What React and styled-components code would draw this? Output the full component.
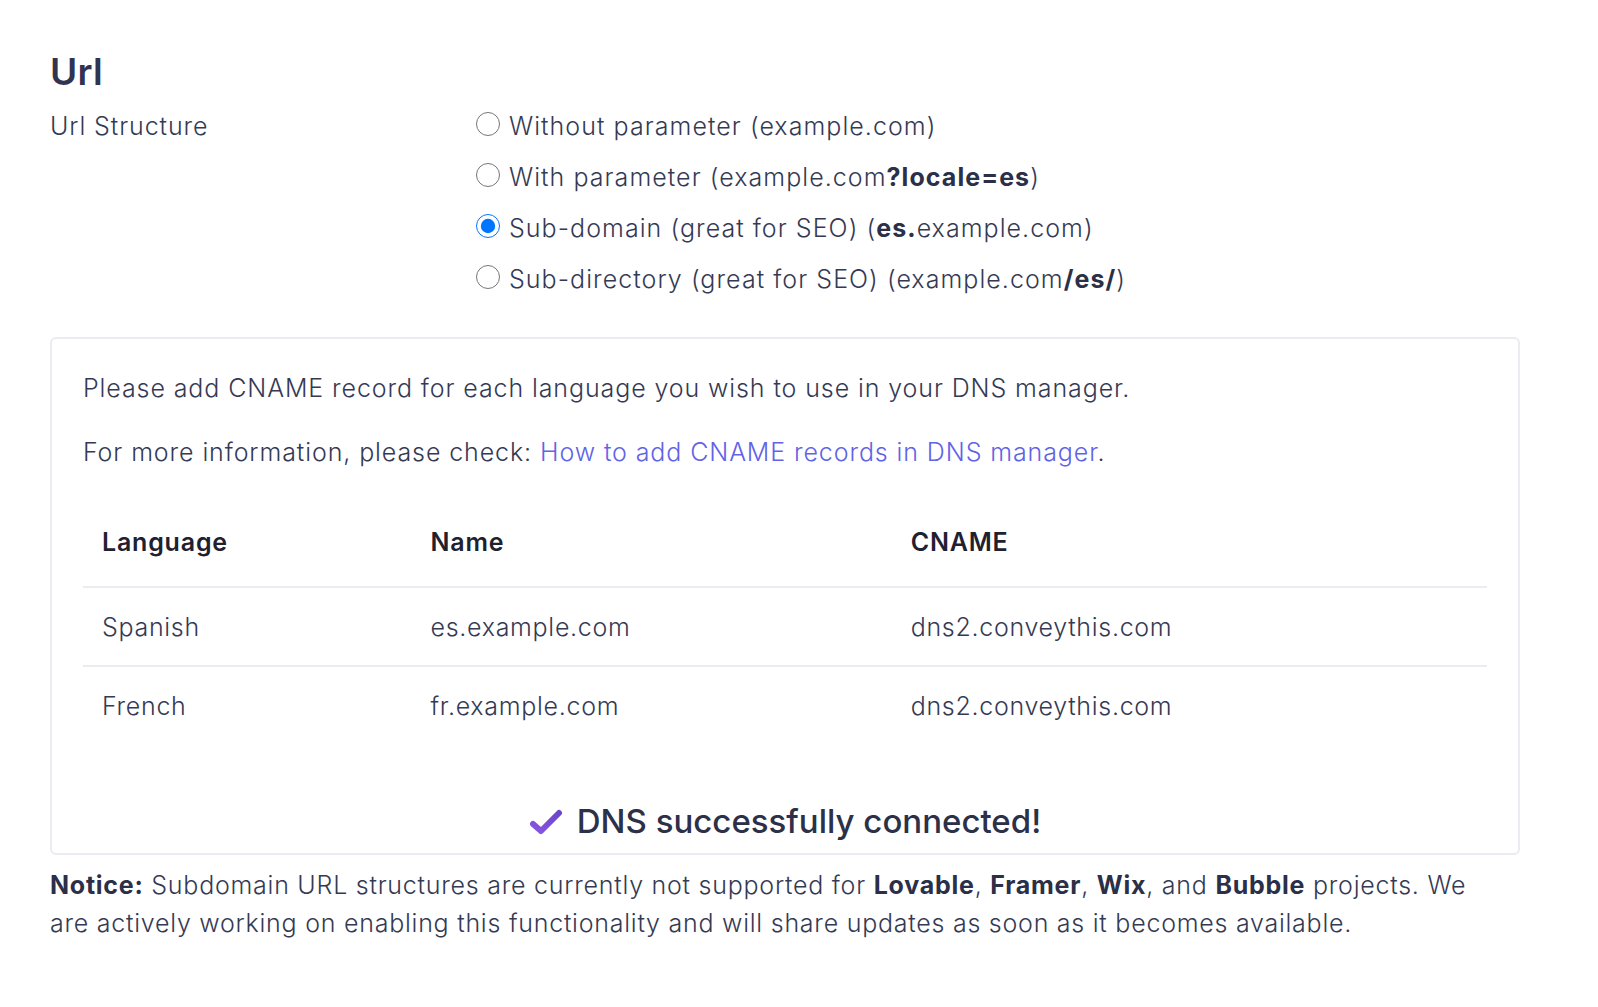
import React, { useState } from 'react';
import styled, { createGlobalStyle } from 'styled-components';

const GlobalStyle = createGlobalStyle`
  html, body {
    margin: 0;
    padding: 0;
    background: #ffffff;
  }
  body {
    font-family: Inter, "Open Sans", sans-serif;
    font-weight: 300;
    color: #353a54;
  }
`;

const Page = styled.div`
  width: 1470px;
  padding: 50px 0 40px 50px;
`;

const Title = styled.h2`
  margin: 0 0 12px;
  font-size: 37px;
  font-weight: 600;
  line-height: 44px;
  color: #2f3450;
  letter-spacing: 0.3px;
`;

const FieldRow = styled.div`
  display: grid;
  grid-template-columns: 426px 1fr;
  align-items: start;
`;

const FieldLabel = styled.div`
  font-size: 25px;
  line-height: 32px;
  padding-top: 4px;
  letter-spacing: 0.9px;
`;

const Options = styled.div`
  display: flex;
  flex-direction: column;
  gap: 11px;
`;

const Option = styled.label`
  display: flex;
  align-items: center;
  gap: 9px;
  height: 40px;
  font-size: 25px;
  letter-spacing: 1.05px;
  cursor: pointer;

  input {
    width: 24px;
    height: 24px;
    margin: 0 0 4px;
    cursor: pointer;
  }

  b {
    font-weight: 700;
    color: #2b2f47;
  }
`;

const Panel = styled.div`
  margin-top: 38px;
  border: 2px solid #ebebf1;
  border-radius: 6px;
  padding: 31px 31px 12px;
`;

const Para = styled.p`
  margin: 0 0 28px;
  font-size: 25px;
  line-height: 36px;
  letter-spacing: 0.9px;
`;

const Link = styled.a`
  color: #5f63e6;
  text-decoration: none;
`;

const Table = styled.table`
  width: 100%;
  border-collapse: collapse;
  margin-top: 34px;
`;

const Th = styled.th`
  text-align: left;
  font-weight: 600;
  font-size: 25px;
  line-height: 36px;
  color: #1f2130;
  padding: 20px 19px 26px;
  border-bottom: 2px solid #ebebf1;
  letter-spacing: 0.8px;
  width: ${({ w }) => w || 'auto'};
`;

const Td = styled.td`
  font-size: 25px;
  padding: 21px 19px 20px;
  line-height: 36px;
  letter-spacing: 0.7px;
  border-bottom: ${({ last }) => (last ? 'none' : '2px solid #ebebf1')};
`;

const Success = styled.div`
  display: flex;
  align-items: center;
  justify-content: center;
  gap: 14px;
  margin-top: 57px;
  font-family: Inter, "Noto Sans", sans-serif;
  font-size: 33px;
  font-weight: 500;
  color: #2c3048;
`;

const Notice = styled.p`
  max-width: 1440px;
  margin: 11px 0 0;
  font-size: 25px;
  line-height: 38px;
  letter-spacing: 0.75px;

  b {
    font-weight: 700;
    color: #2b2f47;
  }
`;

const Check = () => (
  <svg width="34" height="28" viewBox="0 0 34 28">
    <defs>
      <linearGradient id="chk" x1="0" y1="1" x2="1" y2="0">
        <stop offset="0" stopColor="#8a55e0" />
        <stop offset="1" stopColor="#6a47c8" />
      </linearGradient>
    </defs>
    <path
      d="M4 17 L12 24 L30 6"
      fill="none"
      stroke="url(#chk)"
      strokeWidth="6"
      strokeLinecap="round"
      strokeLinejoin="round"
    />
  </svg>
);

const options = [
  { id: 'none', label: <>Without parameter (example.com)</> },
  { id: 'param', label: <>With parameter (example.com<b>?locale=es</b>)</> },
  { id: 'sub', label: <>Sub-domain (great for SEO) (<b>es.</b>example.com)</> },
  { id: 'dir', label: <>Sub-directory (great for SEO) (example.com<b>/es/</b>)</> },
];

const records = [
  { lang: 'Spanish', name: 'es.example.com', cname: 'dns2.conveythis.com' },
  { lang: 'French', name: 'fr.example.com', cname: 'dns2.conveythis.com' },
];

export default function App() {
  const [structure, setStructure] = useState('sub');

  return (
    <>
      <GlobalStyle />
      <Page>
        <Title>Url</Title>
        <FieldRow>
          <FieldLabel>Url Structure</FieldLabel>
          <Options>
            {options.map((o) => (
              <Option key={o.id}>
                <input
                  type="radio"
                  name="structure"
                  checked={structure === o.id}
                  onChange={() => setStructure(o.id)}
                />
                <span>{o.label}</span>
              </Option>
            ))}
          </Options>
        </FieldRow>

        <Panel>
          <Para>Please add CNAME record for each language you wish to use in your DNS manager.</Para>
          <Para>
            For more information, please check:{' '}
            <Link href="#">How to add CNAME records in DNS manager</Link>.
          </Para>
          <Table>
            <thead>
              <tr>
                <Th w="23.4%">Language</Th>
                <Th w="34.2%">Name</Th>
                <Th>CNAME</Th>
              </tr>
            </thead>
            <tbody>
              {records.map((r, i) => (
                <tr key={r.lang}>
                  <Td last={i === records.length - 1}>{r.lang}</Td>
                  <Td last={i === records.length - 1}>{r.name}</Td>
                  <Td last={i === records.length - 1}>{r.cname}</Td>
                </tr>
              ))}
            </tbody>
          </Table>
          <Success>
            <Check />
            DNS successfully connected!
          </Success>
        </Panel>

        <Notice>
          <b>Notice:</b> Subdomain URL structures are currently not supported for <b>Lovable</b>,{' '}
          <b>Framer</b>, <b>Wix</b>, and <b>Bubble</b> projects. We are actively working on enabling
          this functionality and will share updates as soon as it becomes available.
        </Notice>
      </Page>
    </>
  );
}
